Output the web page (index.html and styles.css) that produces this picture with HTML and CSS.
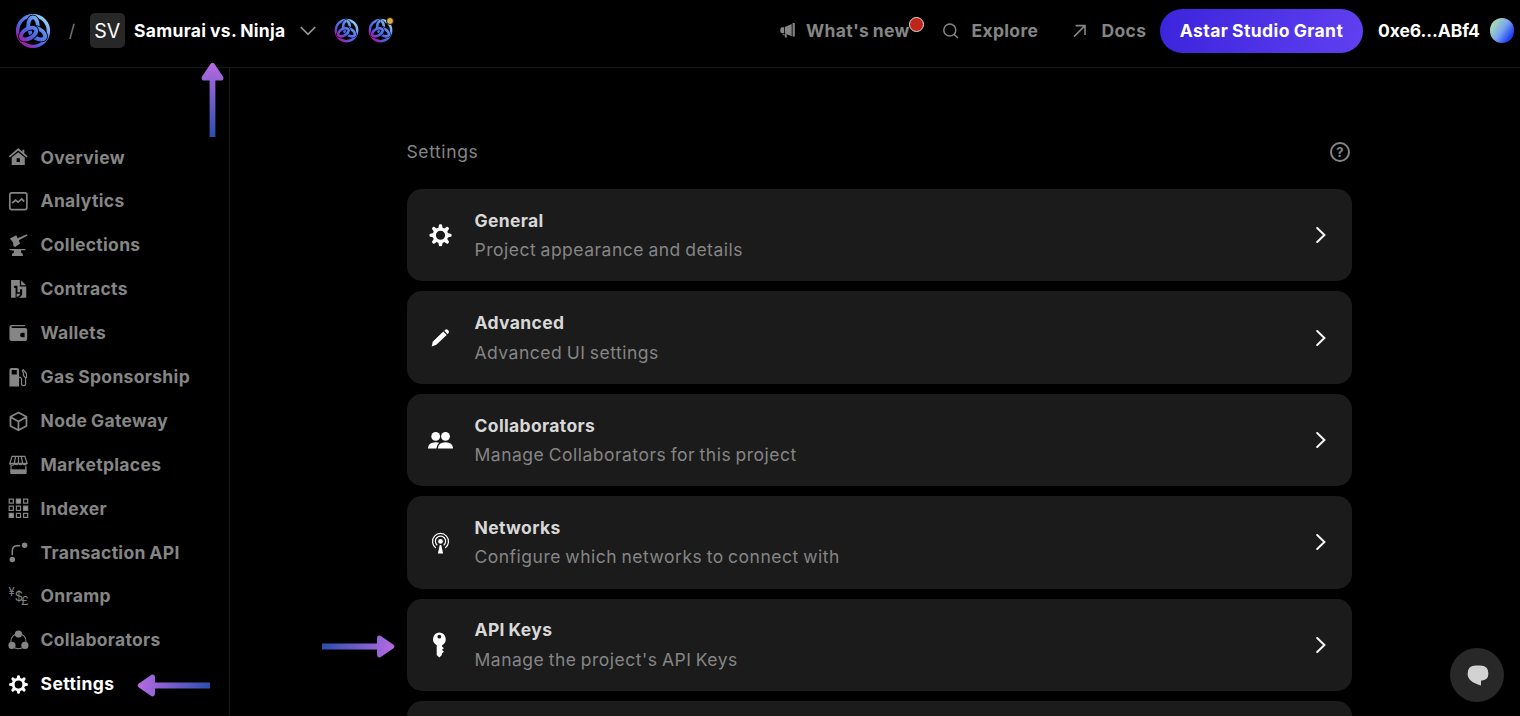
FILE: index.html
```html
<!DOCTYPE html>
<html lang="en">
<head>
<meta charset="utf-8">
<title>Settings</title>
<link rel="stylesheet" href="styles.css">
</head>
<body>
<svg class="defs" width="0" height="0" aria-hidden="true">
  <defs>
    <linearGradient id="brand" x1="0.1" y1="0.9" x2="0.9" y2="0.1">
      <stop offset="0" stop-color="#b5138c"/><stop offset=".2" stop-color="#8a2fc0"/><stop offset=".36" stop-color="#4c5fe0"/><stop offset=".66" stop-color="#5b8af0"/><stop offset="1" stop-color="#a4ecfa"/>
    </linearGradient>
    <linearGradient id="arrow" x1="0" y1="0" x2="1" y2="0">
      <stop offset="0" stop-color="#2a4fb0"/><stop offset="1" stop-color="#b76ae2"/>
    </linearGradient>
    <mask id="knot" maskUnits="userSpaceOnUse" x="0" y="0" width="36" height="36">
      <circle cx="18" cy="18" r="15.4" fill="none" stroke="#fff" stroke-width="3.4"/>
      <g fill="none">
        <g id="loop"><ellipse cx="18" cy="12.8" rx="4.8" ry="8.4" stroke="#000" stroke-width="5.4"/><ellipse cx="18" cy="12.8" rx="4.8" ry="8.4" stroke="#fff" stroke-width="3.8"/></g>
        <use href="#loop" transform="rotate(120 18 18)"/>
        <use href="#loop" transform="rotate(240 18 18)"/>
        <path d="M13.2 12.8c0-4.6 2.1-8.4 4.8-8.4" stroke="#000" stroke-width="5.4"/>
        <path d="M13.2 15v-2.2c0-4.6 2.1-8.4 4.8-8.4" stroke="#fff" stroke-width="3.8"/>
      </g>
    </mask>
    <symbol id="logo" viewBox="0 0 36 36"><rect width="36" height="36" fill="url(#brand)" mask="url(#knot)"/></symbol>
    <symbol id="gear" viewBox="0 0 24 24">
      <g fill="currentColor"><path fill-rule="evenodd" d="M12 3.6a8.4 8.4 0 1 0 0 16.8a8.4 8.4 0 0 0 0-16.8zm0 3.5a4.9 4.9 0 1 1 0 9.8a4.9 4.9 0 0 1 0-9.8z"/>
      <g id="teeth"><path id="tooth" d="M9.6 4.8L10.3 1.2Q10.5.2 11.5.2h1Q13.5.2 13.7 1.2L14.4 4.8zM9.6 19.2l.7 3.6q.2 1 1.2 1h1q1 0 1.2-1l.7-3.6z"/><use href="#tooth" transform="rotate(90 12 12)"/></g>
      <use href="#teeth" transform="rotate(45 12 12)"/></g>
    </symbol>
    <symbol id="chev" viewBox="0 0 10 16"><path d="M1.2 1L8.4 8l-7.2 7" fill="none" stroke="#f4f4f4" stroke-width="2" stroke-linecap="round"/></symbol>
    <symbol id="pointer" viewBox="0 0 73 23"><path fill="url(#arrow)" d="M0 8.6H55V3Q55 .2 58.5.7L71.5 9.8Q73.2 11.5 71.5 13.2L58.5 22.3Q55 22.8 55 20V14.4H0z"/></symbol>
  </defs>
</svg>

<header class="topbar">
  <svg class="logo-lg"><use href="#logo"/></svg>
  <span class="slash">/</span>
  <span class="badge">SV</span>
  <span class="project">Samurai vs. Ninja</span>
  <svg class="drop" viewBox="0 0 16 10"><path d="M.8 1L8 8.4 15.2 1" fill="none" stroke="#999" stroke-width="1.6"/></svg>
  <svg class="logo-sm first"><use href="#logo"/></svg>
  <span class="testnet"><svg class="logo-sm"><use href="#logo"/></svg><i class="status"></i></span>

  <nav class="links">
    <a class="link news"><svg width="16" height="16" viewBox="0 0 16 16" fill="#858585"><path d="M1.6 4.3h2.6v6H1.6Q.2 10 .2 7.3t1.4-3zM5 4l6.7-3v12.3L5 10.4zM12.6 0h2.2v13.6h-2.2zM2.4 11h1.4v1.3H3zM4.4 11h2l.6 3.6H5z"/></svg><span class="txt">What's new<i class="dot"></i></span></a>
    <a class="link explore"><svg width="16" height="16" viewBox="0 0 16 16" fill="none" stroke="#858585" stroke-width="1.5"><circle cx="6.8" cy="7" r="6"/><path d="M11 11.4l4 3.6"/></svg><span class="txt">Explore</span></a>
    <a class="link docs"><svg width="14" height="14" viewBox="0 0 14 14" fill="none" stroke="#858585" stroke-width="1.6"><path d="M1 12.6L12 1.6M2.6 1.6H12V11"/></svg><span class="txt">Docs</span></a>
    <a class="grant">Astar Studio Grant</a>
    <span class="wallet">0xe6...ABf4</span>
    <span class="avatar"></span>
  </nav>
</header>

<div class="body">
  <aside class="sidebar">
    <a class="item"><svg viewBox="0 0 20 20"><path d="M1.4 9.6L10 2.2l8.6 7.4M15 2.8v3.4" fill="none" stroke="currentColor" stroke-width="1.8"/><path fill="currentColor" fill-rule="evenodd" d="M10 5.2l6.4 5V17.6H3.6V10.2zM8.4 11v3.6h3.2V11z"/></svg>Overview</a>
    <a class="item"><svg viewBox="0 0 20 20" fill="none" stroke="currentColor" stroke-width="1.6"><rect x="1.8" y="1.8" width="16.6" height="16.4" rx="2"/><path d="M4 11.8L7.4 8.8l2.4 2L13.4 7.8l2.4 2.6"/></svg>Analytics</a>
    <a class="item"><svg class="tall" viewBox="0 0 20 22"><path fill="currentColor" d="M1.6 4.6L8 1.2l1.4 3L18.6.2l.8 1.4L10.6 6.2l1.2 3.2-4.8 3.6-1.8-1L4.8 8.4zM.8 15h16.4v1.2h-4.4v2.6l1.8 1v2.2H3.8v-2.2l1.8-1V16.8Q1.6 16.6.8 15z"/></svg>Collections</a>
    <a class="item"><svg viewBox="0 0 20 20" fill="currentColor"><path d="M3 1h8.6v6.4H17.8v11H9.6c3.6-.8 4.2-2.4 4.2-4.4v-4h-2v3H9.2V6.6H6v2.2h1.4v9.6H3zM12.8 1.2l4.8 5h-4.8zM8.4 14.4h3.4c0 1.6-1.4 2.6-3.4 3z"/></svg>Contracts</a>
    <a class="item"><svg viewBox="0 0 20 20" fill="currentColor"><path fill-rule="evenodd" d="M3.8 2h12q1 0 1 1.2H4.2q-.9.2-.9.8t.9.8H16.8q1.9 0 1.9 1.6v9.2q0 2-1.9 2H3.4Q1.4 17.6 1.4 15.6V4.4Q1.4 2 3.8 2zM14 9.4a2.2 2.2 0 1 0 0 4.4h2.2v-4.4z"/></svg>Wallets</a>
    <a class="item"><svg viewBox="0 0 20 20"><path fill="currentColor" fill-rule="evenodd" d="M1.4 3q0-2 1.8-2H8.8q2 0 2 2V19H1.4zM3.6 3v4.2h5V3z"/><path fill="none" stroke="currentColor" stroke-width="1.2" d="M10.6 9.8q2.4 0 2.6 2v4.6q0 1.8 1.9 1.8t2.1-1.8V10.6L15 8.2V5.6l-1.4-2.4M14.4 2.2l3.6 4.2v4.4"/></svg>Gas Sponsorship</a>
    <a class="item"><svg viewBox="0 0 20 20" fill="none" stroke="currentColor" stroke-width="1.7" stroke-linejoin="round"><path d="M10.2 1.4l7.8 4.2v9l-7.8 4.2-7.8-4.2v-9zM2.4 5.8l7.8 4.4L18 5.8M10.2 10.2v8"/></svg>Node Gateway</a>
    <a class="item"><svg viewBox="0 0 20 20" fill="none" stroke="currentColor"><path stroke-width="1.2" d="M4 1.4h12.4l2.2 6.8H1.8zM1.6 8.2q1 2.2 3 1.6 1.4 0 1.6-1.6 2 2.6 4 0 2 2.6 4 0 1.8 2.6 4.4 0M6.2 8.2l1.2-6.8M10.2 8.2V1.4M14.2 8.2L13 1.4M3 10.4v7M17.4 10.4v7"/><path fill="currentColor" stroke="none" d="M2.4 14H18v4.6H2.4z"/></svg>Marketplaces</a>
    <a class="item"><svg viewBox="0 0 20 20" fill="none" stroke="currentColor" stroke-width="1.2"><path d="M1.2 1h4v4h-4zM15.2 1h4v4h-4zM1.2 8h4v4h-4zM8.2 8h4v4h-4zM8.2 15h4v4h-4zM15.2 15h4v4h-4z"/><path fill="#999" d="M8.2 1h4v4h-4zM15.2 8h4v4h-4zM1.2 15h4v4h-4z"/></svg>Indexer</a>
    <a class="item"><svg viewBox="0 0 20 20"><path d="M4.2 13V8.6q0-5 5-5h2.6" fill="none" stroke="currentColor" stroke-width="1.5"/><circle cx="16.2" cy="3.2" r="2.7" fill="currentColor"/><circle cx="4.2" cy="17" r="2.7" fill="currentColor"/></svg>Transaction API</a>
    <a class="item"><svg class="money" viewBox="0 0 20 20" fill="currentColor"><text x="0.6" y="9.4" font-size="11">¥</text><text x="6.6" y="14.4" font-size="12.5">$</text><text x="12.8" y="18.8" font-size="12">£</text></svg>Onramp</a>
    <a class="item"><svg viewBox="0 0 20 20"><circle cx="10.2" cy="11" r="7.4" fill="none" stroke="currentColor" stroke-width="1"/><g fill="currentColor"><circle cx="10.2" cy="4" r="3.5"/><circle cx="3.9" cy="15" r="3.5"/><circle cx="16.5" cy="15" r="3.5"/></g></svg>Collaborators</a>
    <a class="item active"><svg><use href="#gear"/></svg>Settings</a>
  </aside>

  <main class="content">
    <div class="head"><h1>Settings</h1><span class="help">?</span></div>
    <section class="cards">
      <a class="card"><svg class="ico" width="22.5" height="22.5"><use href="#gear"/></svg><div><h2>General</h2><p>Project appearance and details</p></div><svg class="go"><use href="#chev"/></svg></a>
      <a class="card"><svg class="ico" width="24" height="24" viewBox="0 0 24 24" fill="#fff"><path d="M3.2 20.4l1-4.6L14.8 5.6l3.4 3.4L7.8 18.8zM15.8 4.8l1.4-1.2q1-.7 2 .2l1 1.2q.8 1-.2 1.9L19.2 8.2z"/></svg><div><h2>Advanced</h2><p>Advanced UI settings</p></div><svg class="go"><use href="#chev"/></svg></a>
      <a class="card"><svg class="ico" width="26" height="24" viewBox="0 0 26 24" fill="#fff"><circle cx="8.2" cy="8.4" r="4.4"/><circle cx="18" cy="8.4" r="4.4"/><path d="M.4 20.6Q.8 14.2 8.2 14.2q2 0 3.4.5Q9 17 8.8 20.6zM10.4 20.6Q10.8 14.2 18 14.2t7.6 6.4z"/></svg><div><h2>Collaborators</h2><p>Manage Collaborators for this project</p></div><svg class="go"><use href="#chev"/></svg></a>
      <a class="card"><svg class="ico" width="24" height="24" viewBox="0 0 24 24" fill="none" stroke="#fff" stroke-width="1.2"><path d="M7.4 18a8 8 0 1 1 9.2 0M8.8 15.2a5.1 5.1 0 1 1 6.4 0"/><circle cx="12" cy="11.4" r="2.4" fill="#fff" stroke="none"/><path d="M11.2 15h1.6l1.8 8.6H9.4z" fill="#fff" stroke="none"/></svg><div><h2>Networks</h2><p>Configure which networks to connect with</p></div><svg class="go"><use href="#chev"/></svg></a>
      <a class="card"><svg class="ico" width="24" height="26" viewBox="0 0 24 26"><path fill="#fff" fill-rule="evenodd" d="M10.8.4a6.8 6.8 0 0 0-2.6 12.8V23l2.6 2.6L13.4 23v-1.6l2-1.6-2-2 2-1.6-1.8-1.6v-1.4A6.8 6.8 0 0 0 10.8.4zm0 2.4a1.9 1.9 0 1 1 0 3.8a1.9 1.9 0 0 1 0-3.8z"/></svg><div><h2>API Keys</h2><p>Manage the project's API Keys</p></div><svg class="go"><use href="#chev"/></svg></a>
      <a class="card"></a>
    </section>
  </main>
</div>

<svg class="pointer up" preserveAspectRatio="none" viewBox="0 0 73 23"><use href="#pointer" width="73" height="23"/></svg>
<svg class="pointer left"><use href="#pointer"/></svg>
<svg class="pointer right"><use href="#pointer"/></svg>
<button class="chat" aria-label="Chat"><svg width="22" height="22" viewBox="0 0 22 22"><path fill="#d2d2d2" d="M8.8 1.5h4.4Q21.4 1.5 21.4 9.6 21.4 16.4 14 16.8v4.6Q.6 18 .6 9.8.6 1.5 8.8 1.5z"/></svg></button>
</body>
</html>
```

FILE: styles.css
```css
* { box-sizing: border-box; }
body {
  margin: 0;
  height: 716px;
  overflow: hidden;
  display: flex;
  flex-direction: column;
  background: #000;
  color: #fff;
  font: 650 17.5px/22px Inter, sans-serif;
  font-variation-settings: "opsz" 14;
  letter-spacing: .32px;
  word-spacing: -.8px;
  white-space: nowrap;
}
svg { display: block; flex: none; overflow: visible; }
.defs { position: absolute; }
h1, h2, p { margin: 0; font-size: inherit; }

.topbar {
  flex: none;
  height: 68px;
  padding: 0 6px 6px 15px;
  display: flex;
  align-items: center;
  border-bottom: 1.5px solid #191919;
}
.logo-lg { width: 36px; height: 36px; }
.slash { width: 39px; padding-left: 3px; text-align: center; color: #777; font-weight: 400; letter-spacing: 0; }
.badge {
  width: 34.5px; height: 34.5px;
  border-radius: 5px;
  background: #272727;
  display: grid;
  place-items: center;
  font-size: 19.5px;
  font-weight: 400;
  letter-spacing: 0;
}
.project { margin-left: 9.5px; width: 166px; letter-spacing: .3px; }
.drop { width: 16px; height: 10px; }
.logo-sm { width: 25px; height: 25px; }
.first { margin: 0 9.5px 0 17.5px; }
.testnet { position: relative; }
.status {
  position: absolute; right: -1px; top: -1px;
  width: 8px; height: 8px;
  border: 1px solid #1c1608;
  border-radius: 50%;
  background: #dcae4c;
}
.links { margin-left: auto; display: flex; align-items: center; }
.link { display: flex; align-items: center; color: #858585; }
.txt { position: relative; }
.news { width: 162.5px; gap: 10px; }
.explore { width: 130.5px; gap: 13px; }
.docs { width: 87px; gap: 14.5px; }
.dot {
  position: absolute; left: 103px; top: -3px;
  width: 15px; height: 15px;
  border: 1px solid #ddd;
  border-radius: 50%;
  background: #c02519;
}
.grant {
  width: 203px; height: 44px;
  border-radius: 22px;
  background: linear-gradient(100deg, #3b24dc, #6040f0);
  display: grid;
  place-items: center;
  letter-spacing: .42px;
}
.wallet { margin-left: 15px; width: 111.5px; letter-spacing: -.1px; }
.avatar { width: 24.5px; height: 24.5px; border-radius: 50%; background: linear-gradient(125deg, #a5d3bd 20%, #78a5ef 50%, #2443f5 80%); }

.body { flex: 1; min-height: 0; display: flex; }
.sidebar {
  width: 230px;
  padding: 67.6px 0 0 8px;
  border-right: 1.5px solid #191919;
  flex: none;
}
.item { height: 43.9px; display: flex; align-items: center; gap: 12px; color: #858585; }
.item svg { width: 20.5px; height: 20.5px; }
.item .tall { height: 22px; }
.money { font-weight: 400; letter-spacing: 0; }
.item.active { color: #fff; letter-spacing: .42px; }
.item.active svg { width: 19px; height: 19px; margin: 0 .5px 0 1px; }

.content { flex: 1; padding: 72.5px 168.5px 0 176.5px; }
.head { display: flex; justify-content: space-between; align-items: center; height: 23px; color: #858585; }
h1 { font-weight: 400; letter-spacing: .6px; }
.help {
  width: 20px; height: 20px;
  margin-right: 1.5px;
  border: 2px solid #858585;
  border-radius: 50%;
  display: grid;
  place-items: center;
  font-size: 13px;
  line-height: 16px;
  letter-spacing: 0;
}
.cards { display: flex; flex-direction: column; gap: 10px; margin-top: 25.5px; }
.card {
  flex: none;
  height: 92.4px;
  padding: 0 25.5px 0 20px;
  border-radius: 15px;
  background: #1b1b1b;
  display: flex;
  align-items: center;
  color: #fff;
}
.card div { margin-left: 21px; flex: 1; }
.ico { width: 27px; }
h2 { font-weight: 650; color: #d8d8d8; line-height: 29.3px; letter-spacing: .36px; }
p { font-weight: 400; color: #858585; line-height: 29.3px; letter-spacing: .5px; word-spacing: -1px; }
.go { width: 10px; height: 16px; }

.pointer { position: absolute; width: 73px; height: 23px; }
.up { left: 175px; top: 87.5px; width: 75px; transform: rotate(-90deg); }
.left { left: 136.5px; top: 674px; transform: rotate(180deg); }
.right { left: 321.5px; top: 635px; }
.chat {
  position: absolute; left: 1450px; top: 648px;
  width: 54px; height: 54px;
  padding: 0 0 0 1px;
  border: 0;
  border-radius: 50%;
  background: #282828;
  display: grid;
  place-items: center;
}
```
